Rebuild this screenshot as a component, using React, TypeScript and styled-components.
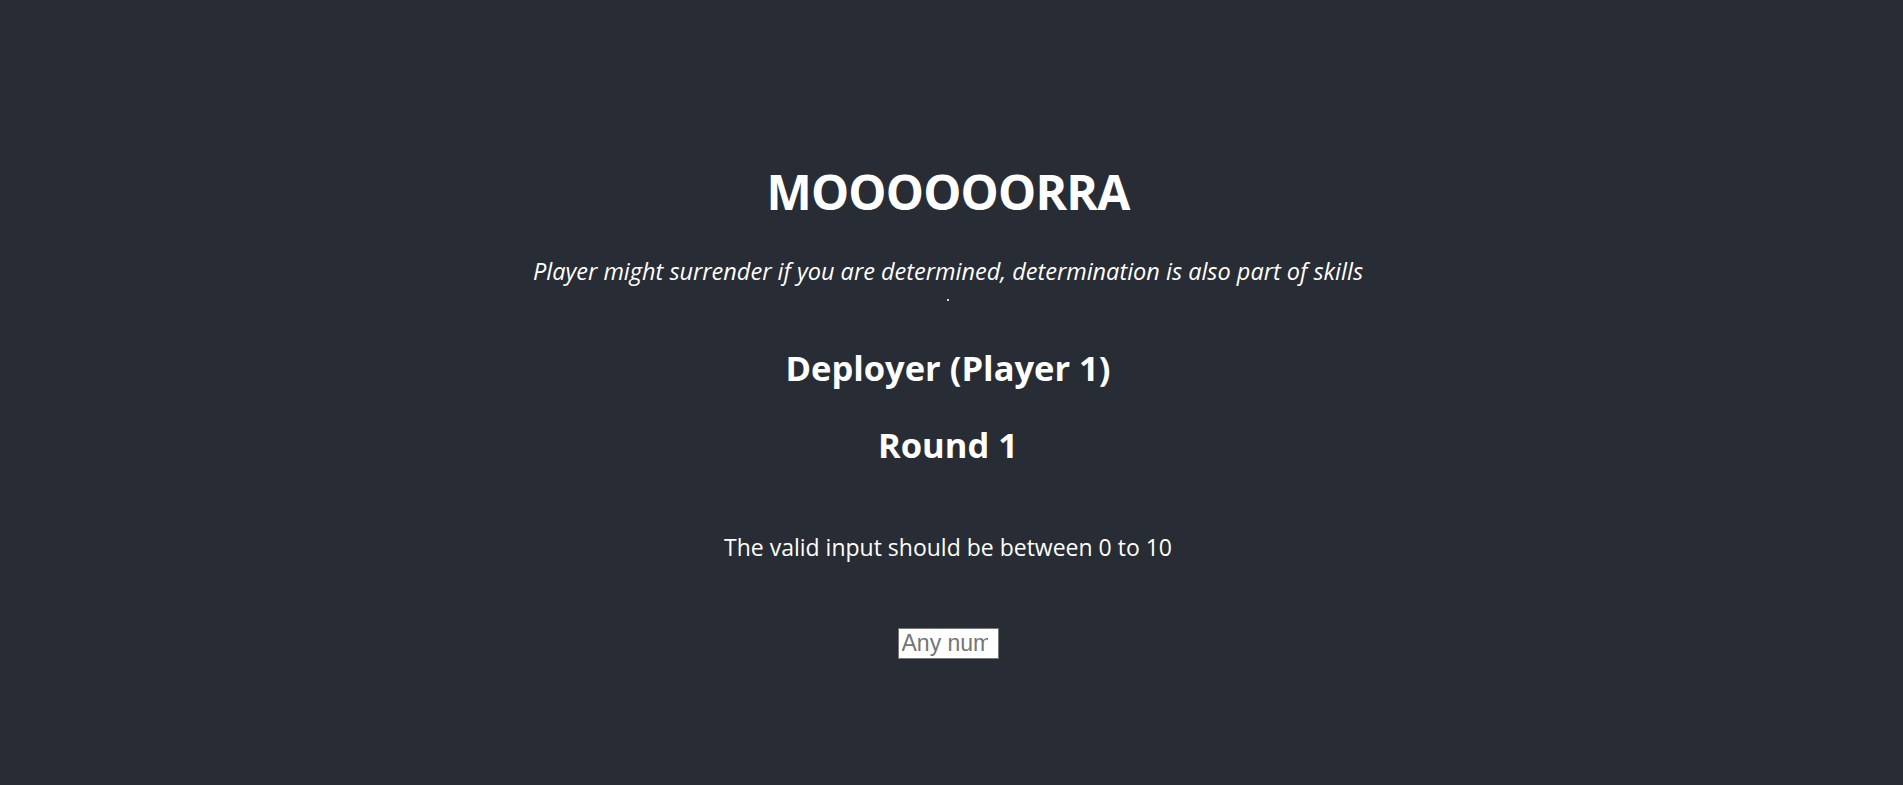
import React from "react";
import styled, { createGlobalStyle } from "styled-components";

const Global = createGlobalStyle`
  html, body {
    margin: 0;
    padding: 0;
    background: #282c34;
  }
  body {
    font-family: "Open Sans", "Noto Sans", sans-serif;
    color: #ffffff;
  }
`;

const Page = styled.main`
  min-height: 100vh;
  display: flex;
  flex-direction: column;
  align-items: center;
  padding: 168px 7px 0 0;
  box-sizing: border-box;
  text-align: center;
`;

const Title = styled.h1`
  margin: 0;
  font-size: 48px;
  line-height: 1;
  font-weight: 700;
  letter-spacing: -0.8px;
`;

const Tagline = styled.p`
  margin: 44px 0 0;
  font-size: 23.5px;
  line-height: 1;
  font-style: italic;
  font-weight: 400;
`;

const Dot = styled.span`
  display: block;
  width: 2px;
  height: 2px;
  margin-top: 15px;
  background: #d8d8d8;
`;

const Heading = styled.h2<{ $gap: number }>`
  margin: ${(p) => p.$gap}px 0 0;
  font-size: 34.5px;
  line-height: 1;
  font-weight: 700;
`;

const Hint = styled.p`
  margin: 73px 0 0;
  font-size: 23px;
  line-height: 1;
  font-weight: 400;
`;

const NumberInput = styled.input`
  margin-top: 69px;
  width: 101px;
  height: 31px;
  box-sizing: border-box;
  padding: 1px 10px 1px 3px;
  border: 1px solid #767676;
  background: #ffffff;
  font-family: "Liberation Sans", Arial, sans-serif;
  font-size: 23px;
  color: #000;
  outline: none;
  -moz-appearance: textfield;
  &::-webkit-inner-spin-button,
  &::-webkit-outer-spin-button {
    -webkit-appearance: none;
    margin: 0;
  }
  &::placeholder {
    color: #757575;
  }
`;

export default function App() {
  return (
    <>
      <Global />
      <Page>
        <Title>MOOOOOORRA</Title>
        <Tagline>
          Player might surrender if you are determined, determination is also part of skills
        </Tagline>
        <Dot />
        <Heading $gap={50}>Deployer (Player 1)</Heading>
        <Heading $gap={43}>Round 1</Heading>
        <Hint>The valid input should be between 0 to 10</Hint>
        <NumberInput type="number" placeholder="Any number" />
      </Page>
    </>
  );
}
